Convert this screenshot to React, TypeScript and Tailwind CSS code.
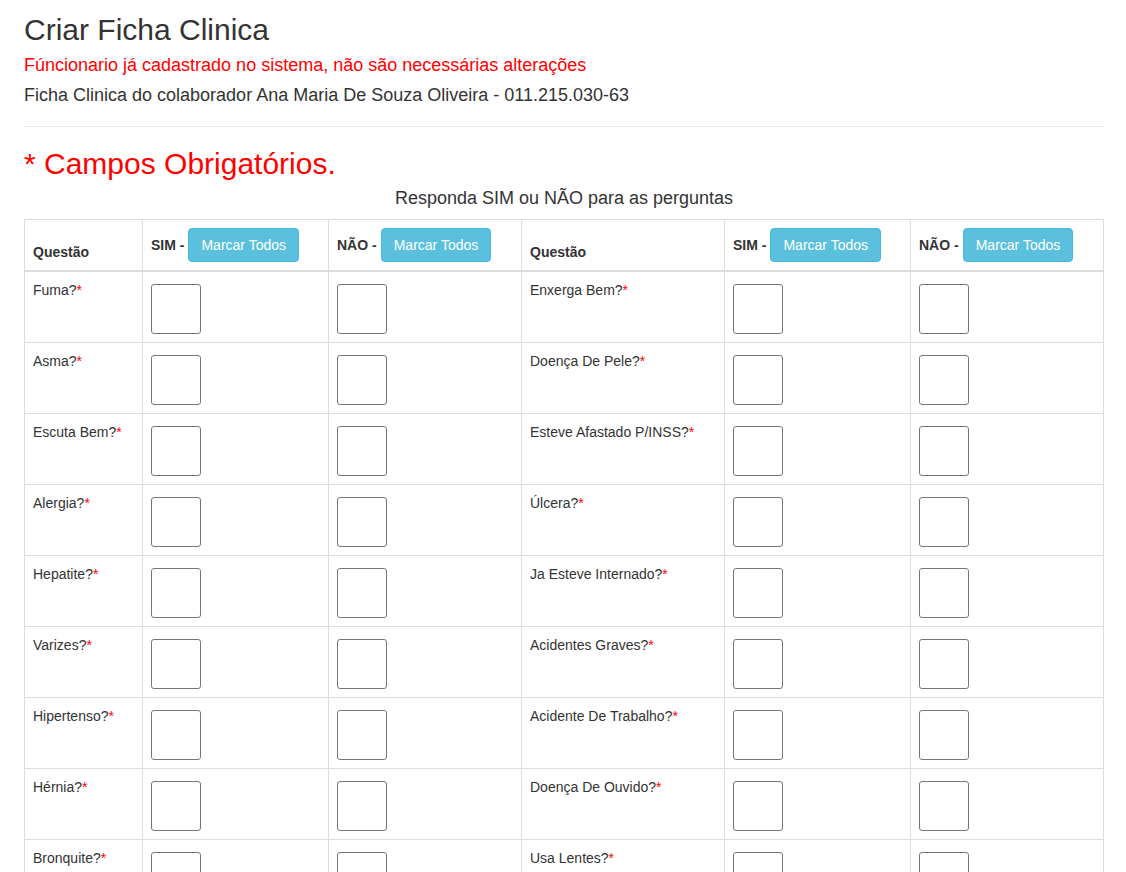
import React from "react"

const left = [
  "Fuma?",
  "Asma?",
  "Escuta Bem?",
  "Alergia?",
  "Hepatite?",
  "Varizes?",
  "Hipertenso?",
  "Hérnia?",
  "Bronquite?",
]

const right = [
  "Enxerga Bem?",
  "Doença De Pele?",
  "Esteve Afastado P/INSS?",
  "Úlcera?",
  "Ja Esteve Internado?",
  "Acidentes Graves?",
  "Acidente De Trabalho?",
  "Doença De Ouvido?",
  "Usa Lentes?",
]

function MarkAll({ label }: { label: string }) {
  return (
    <div className="flex items-baseline gap-[4px]">
      <span className="font-bold">{label} -</span>
      <button
        type="button"
        className="px-[12px] py-[6px] text-[14px] leading-[20px] font-normal text-white bg-[#5bc0de] border border-[#46b8da] rounded-[4px]"
      >
        Marcar Todos
      </button>
    </div>
  )
}

function Box() {
  return (
    <input
      type="checkbox"
      className="block appearance-none mt-[4px] w-[50px] h-[50px] bg-white border border-[#767676] rounded-[3px]"
    />
  )
}

function Question({ text }: { text: string }) {
  return (
    <span>
      {text}
      <span className="text-[#ff0000]">*</span>
    </span>
  )
}

export default function App() {
  const th = "border border-[#ddd] border-b-2 px-[8px] py-[8px] text-left"
  const td = "border border-[#ddd] px-[8px] pt-[8px] pb-[7px] align-top h-[71px]"

  return (
    <div
      className="bg-white min-h-screen pl-6 pr-[22px] pt-[13px] text-[#333] text-[14px] leading-[20px]"
      style={{ fontFamily: '"Liberation Sans", Arial, sans-serif' }}
    >
      <h2 className="text-[30px] leading-[33px]">Criar Ficha Clinica</h2>
      <p className="mt-[4px] text-[18px] leading-[30px] text-[#ff0000]">
        Fúncionario já cadastrado no sistema, não são necessárias alterações
      </p>
      <p className="text-[18px] leading-[30px]">
        Ficha Clinica do colaborador Ana Maria De Souza Oliveira - 011.215.030-63
      </p>
      <hr className="mt-[16px] border-t border-[#eee]" />
      <h2 className="mt-[20px] text-[30px] leading-[33px] text-[#ff0000]">* Campos Obrigatórios.</h2>

      <table className="w-[1079px] table-fixed border-collapse">
        <caption className="pt-[7px] pb-[9px] text-[18px] leading-[23px] text-center">
          Responda SIM ou NÃO para as perguntas
        </caption>
        <colgroup>
          <col className="w-[118px]" />
          <col className="w-[186px]" />
          <col className="w-[193px]" />
          <col className="w-[203px]" />
          <col className="w-[186px]" />
          <col className="w-[193px]" />
        </colgroup>
        <thead>
          <tr>
            <th className={`${th} align-bottom`}>Questão</th>
            <th className={th}>
              <MarkAll label="SIM" />
            </th>
            <th className={th}>
              <MarkAll label="NÃO" />
            </th>
            <th className={`${th} align-bottom`}>Questão</th>
            <th className={th}>
              <MarkAll label="SIM" />
            </th>
            <th className={th}>
              <MarkAll label="NÃO" />
            </th>
          </tr>
        </thead>
        <tbody>
          {left.map((q, i) => (
            <tr key={q}>
              <td className={td}>
                <Question text={q} />
              </td>
              <td className={td}>
                <Box />
              </td>
              <td className={td}>
                <Box />
              </td>
              <td className={td}>
                <Question text={right[i]} />
              </td>
              <td className={td}>
                <Box />
              </td>
              <td className={td}>
                <Box />
              </td>
            </tr>
          ))}
        </tbody>
      </table>
    </div>
  )
}
